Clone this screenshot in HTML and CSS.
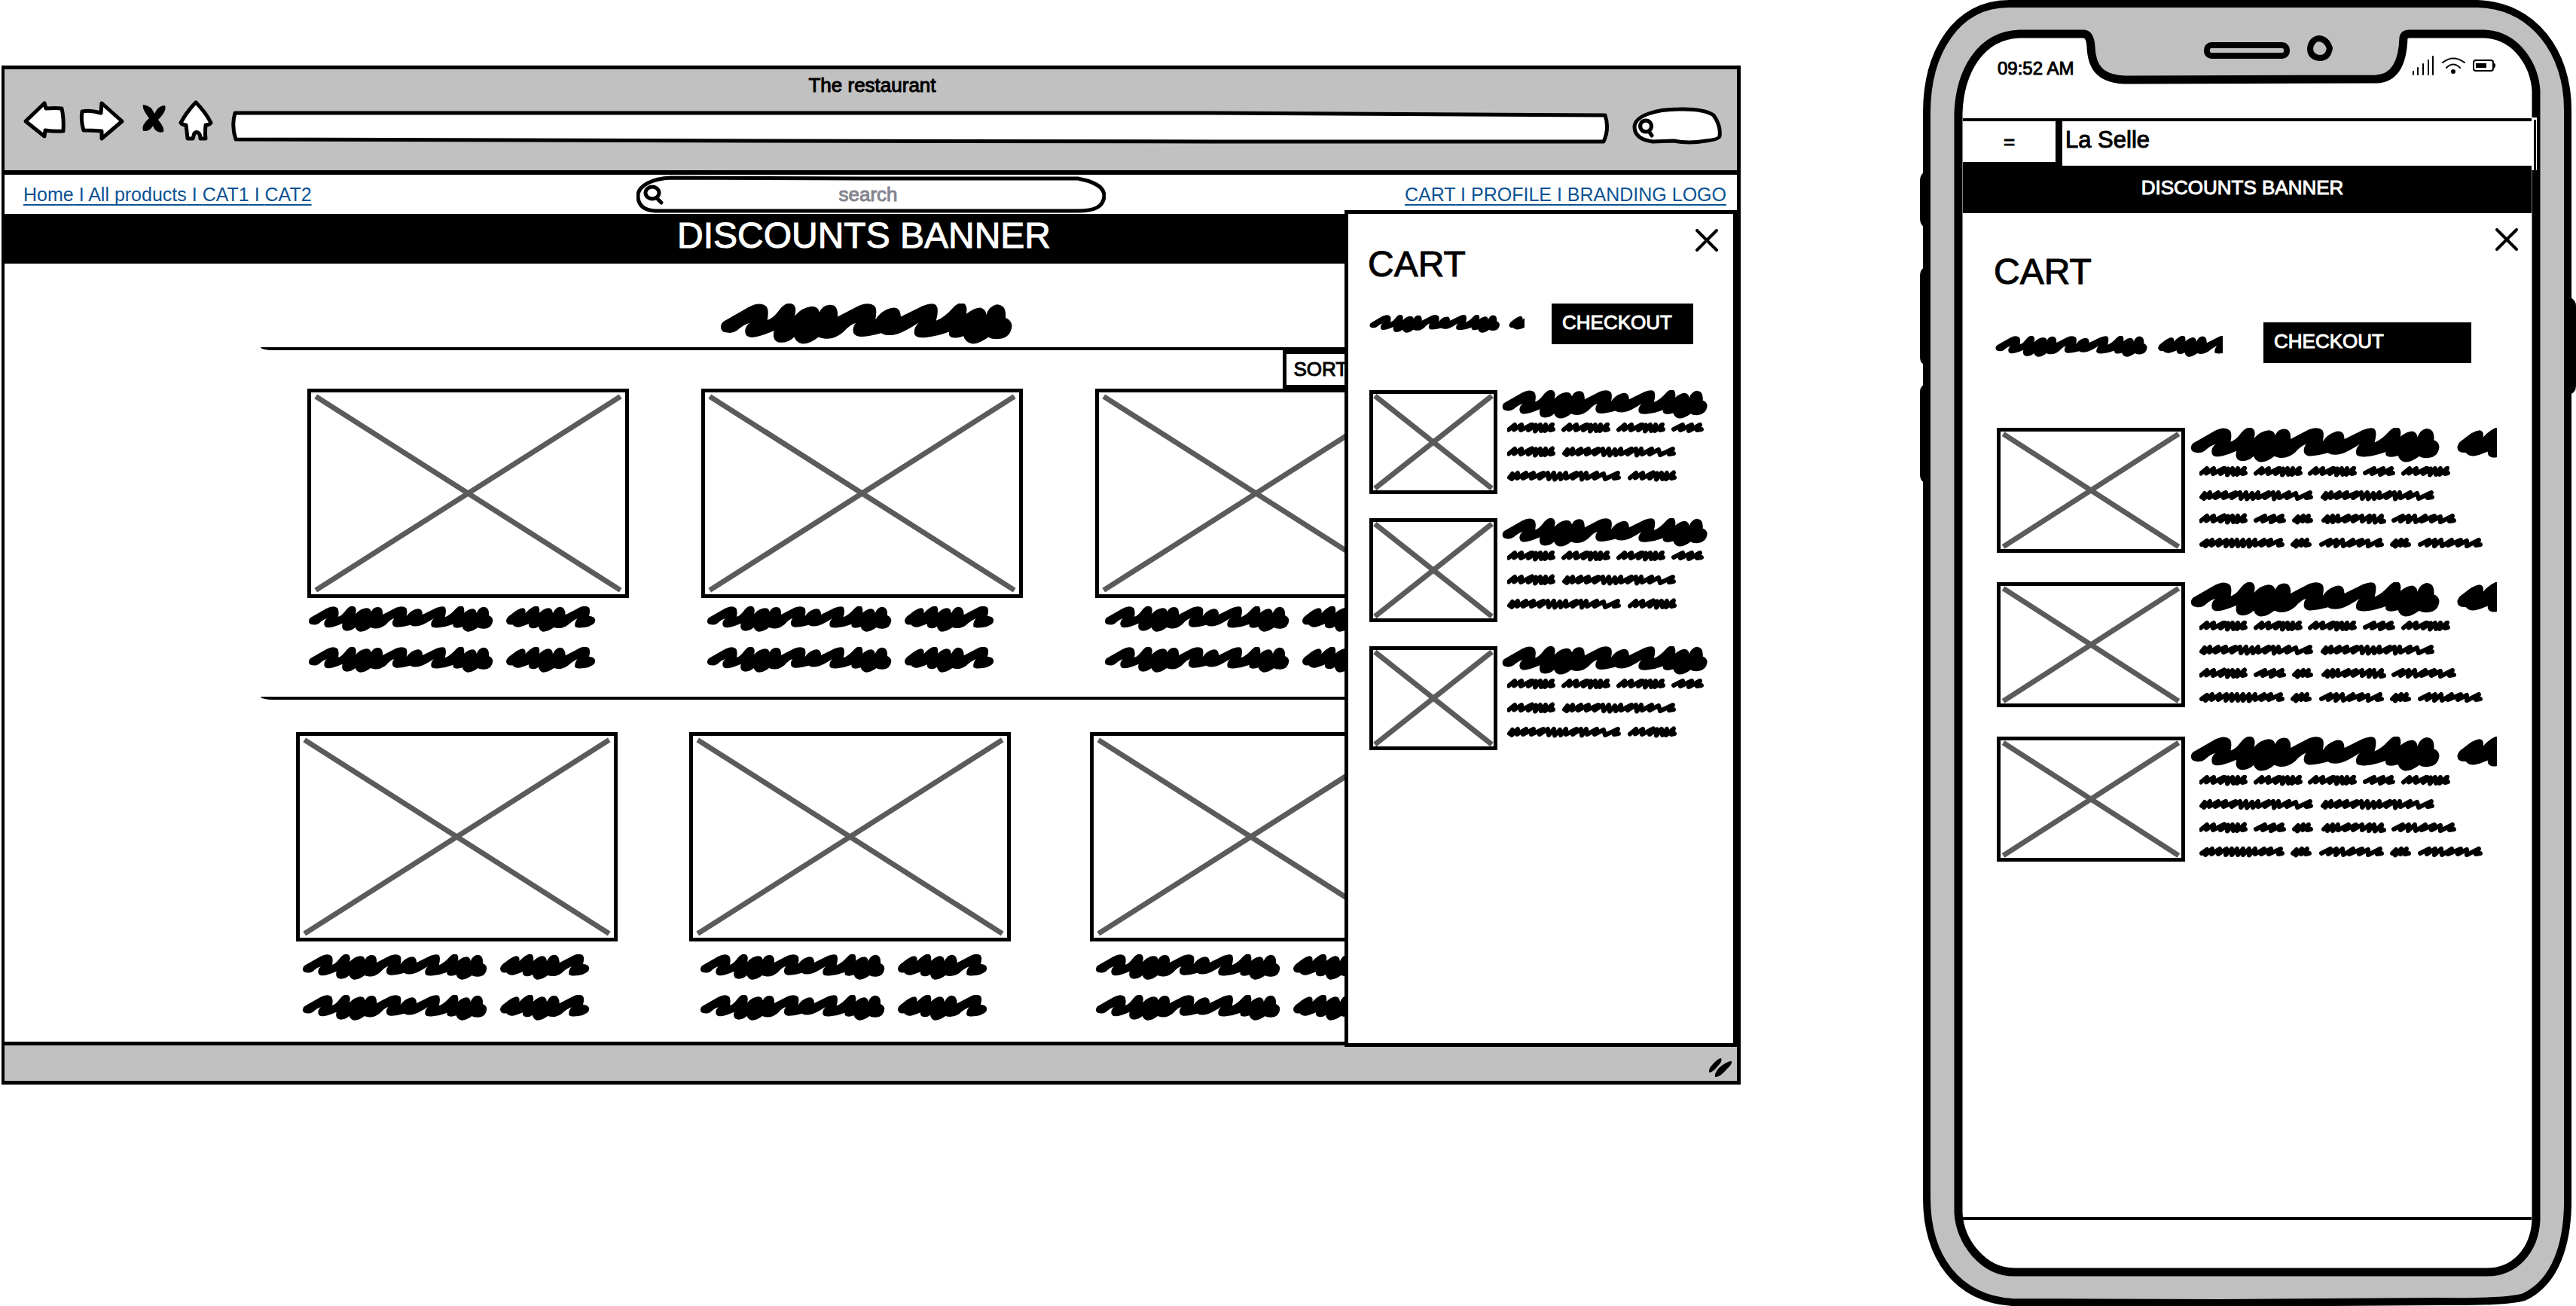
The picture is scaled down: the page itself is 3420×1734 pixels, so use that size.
FILE: index.html
```html
<!DOCTYPE html>
<html lang="en">
<head>
<meta charset="utf-8">
<title>The restaurant</title>
<link rel="stylesheet" href="styles.css">
</head>
<body>
<svg class="sprite" aria-hidden="true">
  <!-- two scribbled words, used for headings and labels -->
  <symbol id="phrase" overflow="visible">
    <path d="M2 56Q4 46 14 42L72 9Q100-6 116 7Q124 15 119 41Q132 38 146 20Q162-2 176-1Q196 2 188 31Q206 10 230 7Q248 7 250 22Q258 4 276 3Q298 2 296 33L350 5Q376-5 390 7Q396 15 391 40Q404 20 424 13Q454 2 455 33L510 6Q536-4 544 4Q552 14 544 43Q566 34 586 11Q602-6 614-1Q624 6 620 26Q640 10 656 10Q670 14 670 28Q678 6 696 2Q722 2 719 36Q734 42 735 56Q732 86 702 89Q682 90 676 84Q652 102 634 101Q618 98 613 82Q596 88 584 85Q574 82 577 71Q548 82 520 85Q490 88 489 74Q488 60 500 48Q466 70 448 76Q420 84 406 74Q372 84 350 83Q334 80 335 66Q336 54 342 49Q330 50 310 72Q286 92 262 88Q254 87 248 84Q226 102 206 101Q192 98 187 84Q172 98 154 98Q138 98 135 84Q134 76 136 68Q104 82 82 85Q62 86 63 68Q64 56 74 49Q60 52 42 68Q30 76 18 73Q0 72 2 56Z"/>
    <path d="M788 56Q792 42 806 34Q836 8 854 7Q868 10 864 28Q886 4 906-2Q924-2 920 26Q938 10 954 7Q972 6 974 28Q984 4 1002 2Q1024 2 1024 34L1076 7Q1098-6 1116 3Q1126 12 1118 38Q1142 40 1143 56Q1142 76 1100 84Q1068 88 1062 80Q1060 62 1072 49Q1056 54 1034 74Q1006 94 978 84Q954 102 934 101Q920 96 917 80Q904 90 890 87Q876 84 878 70Q850 82 838 83Q822 84 813 73Q788 76 788 56Z"/>
  </symbol>
  <symbol id="word-a" overflow="visible"><path d="M2 9.500L10 3L9 9.500L19 3L18 10L33 2.500L28 10L38 3.500L37 11.500L44 3L45 11L51 3L50 11L60 2.500L57 10L61 9"/></symbol>
  <symbol id="word-b" overflow="visible"><path d="M3 9L7 4L6 11L14 3L13 10L25 3L21 10L35 3L32 10L48 3L43 10L54 3L55 11L62 3L63 11.500L70 4L71 11L78 3L78 10L92 3L87 10L98 3L99 11.500L105 3L106 10L119 3L116 10L128 4L130 11L147 3L142 10L148 9"/></symbol>
  <symbol id="word-c" overflow="visible"><path d="M2 9L14 3L11 10L26 3L22 11L37 3L33 10L39 9"/></symbol>
  <symbol id="word-d" overflow="visible"><path d="M3 9L8 4L7 11.500L15 3L14 10L22 3L20 10L25 9"/></symbol>
  <symbol id="word-e" overflow="visible"><path d="M3 9L8 4L8 11L15 3L15 11L22 3L22 10L36 3L31 10L46 3L42 10L54 3L54 10L64 3L63 11L70 3L71 11.500L80 3L79 11L83 10"/></symbol>
  <symbol id="word-f" overflow="visible"><path d="M2 9L14 3L11 10L22 3L21 11L30 3L31 11L44 3L39 10L56 3L52 10L64 4L64 11L80 3L76 10L82 9"/></symbol>
  <symbol id="word-g" overflow="visible"><path d="M3 9L10 4L8 11L17 3L16 10L27 3L25 10L36 3L35 11L43 3L43 11L50 3L51 11L58 3L58 11L66 3L66 11.500L74 3L74 10L86 3L82 10L95 3L92 10L108 3L105 10L110 9"/></symbol>
  <symbol id="blurb-short" viewBox="0 0 262 79">
    <use href="#word-a"/><use href="#word-a" x="73"/><use href="#word-a" x="146"/><use href="#word-c" x="219"/>
    <use href="#word-a" y="32"/><use href="#word-b" x="73" y="32"/>
    <use href="#word-b" y="64"/><use href="#word-a" x="161" y="64"/>
  </symbol>
  <symbol id="blurb-long" viewBox="0 0 378 111">
    <use href="#word-a"/><use href="#word-a" x="73"/><use href="#word-a" x="145"/><use href="#word-c" x="218"/><use href="#word-a" x="269"/>
    <use href="#word-b" y="32"/><use href="#word-b" x="161" y="32"/>
    <use href="#word-a" y="63"/><use href="#word-c" x="73" y="63"/><use href="#word-d" x="123" y="63"/><use href="#word-e" x="162" y="63"/><use href="#word-f" x="256" y="63"/>
    <use href="#word-g" y="95"/><use href="#word-d" x="121" y="95"/><use href="#word-f" x="160" y="95"/><use href="#word-d" x="253" y="95"/><use href="#word-f" x="291" y="95"/>
  </symbol>
  <symbol id="cross" viewBox="0 0 100 100" preserveAspectRatio="none">
    <path d="M1.500 2L98.500 98M98.500 2L1.500 98" vector-effect="non-scaling-stroke"/>
  </symbol>
  <symbol id="close" viewBox="0 0 30 30"><path d="M2 2L28 28M28 2L2 28"/></symbol>
</svg>

<main class="board">
  <section class="window">
    <header class="chrome">
      <div class="window-title">The restaurant</div>
      <div class="toolbar">
        <button class="tool" aria-label="Back"><svg width="60" height="60" viewBox="0 0 60 60"><path class="shape" d="M4 29L29 5L31 12Q44 11 52 12Q55 25 54 42Q42 43 30 41L29 49Z"/></svg></button>
        <button class="tool" aria-label="Forward"><svg width="62" height="60" viewBox="0 0 62 60"><path class="shape" d="M5 16Q16 14 30 18L31 5L58 29L31 52L31 42Q18 41 7 41Q3 28 5 16Z"/></svg></button>
        <button class="tool" aria-label="Stop"><svg width="42" height="60" viewBox="-6 0 42 60"><path d="M4 7Q15 8 19 19Q24 8 33 8Q36 15 24 27Q33 38 31 43Q21 46 17 35Q13 43 4 42Q1 34 12 25Q2 12 4 7Z"/></svg></button>
        <button class="tool" aria-label="Home"><svg width="50" height="60" viewBox="0 0 50 60"><path class="shape" d="M24 4Q37 17 44 31Q42 34 37 34Q36 44 37 52L30 52Q30 47 28 45Q25 42 22 45L20 52L13 52Q12 42 11 34Q6 34 4 31Q12 16 24 4Z"/></svg></button>
        <div class="sketch-field address">
          <svg viewBox="0 0 1830 44" preserveAspectRatio="none" aria-hidden="true"><path class="shape" d="M5 3L1300 3L1824 6Q1830 24 1822 41L1300 41L700 40L6 38Q0 20 5 3Z"/></svg>
          <input type="text" aria-label="Address">
        </div>
        <div class="sketch-field quick">
          <svg viewBox="0 0 119 50" preserveAspectRatio="none" aria-hidden="true"><path class="shape" d="M3 26C4 12 30 3 62 3Q95 2 108 11Q118 25 116 39Q115 43 98 45Q75 49 55 45L27 46C12 44 3 38 3 26Z"/><path class="line" d="M18 18a7.500 7.500 0 1 0 .1 0ZM22 32L26 38"/></svg>
          <input type="search" aria-label="Quick search">
        </div>
      </div>
    </header>

    <nav class="nav">
      <div class="links"><a href="#">Home</a> I <a href="#">All products</a> I <a href="#">CAT1</a> I <a href="#">CAT2</a></div>
      <div class="sketch-field search">
        <svg viewBox="0 0 623 50" preserveAspectRatio="none" aria-hidden="true"><path class="shape" d="M46 3L300 4L586 4C608 8 621 16 621 27C620 42 608 47 586 47L25 47C8 46 2 38 2 27C2 14 20 4 46 3Z"/></svg>
        <svg class="lens" width="40" height="50" viewBox="0 0 40 50" aria-hidden="true"><ellipse class="line" cx="21" cy="23" rx="9" ry="8"/><path class="line" d="M27 30L33 36"/></svg>
        <input type="search" placeholder="search" aria-label="Search">
      </div>
      <div class="links account"><a href="#">CART</a> I <a href="#">PROFILE</a> I <a href="#">BRANDING LOGO</a></div>
    </nav>

    <div class="banner">DISCOUNTS BANNER</div>

    <div class="catalogue">
      <div class="page-title"><svg viewBox="0 0 736 102"><use href="#phrase"/></svg></div>
      <hr>
      <div class="sort-row"><button class="sort">SORT</button></div>
      <div class="shelf">
        <div class="photos">
          <svg class="photo"><use href="#cross"/></svg><svg class="photo"><use href="#cross"/></svg><svg class="photo"><use href="#cross"/></svg>
        </div>
        <div class="labels">
          <svg viewBox="0 0 1144 102"><use href="#phrase"/></svg><svg viewBox="0 0 1144 102"><use href="#phrase"/></svg><svg viewBox="0 0 1144 102"><use href="#phrase"/></svg>
          <svg viewBox="0 0 1144 102"><use href="#phrase"/></svg><svg viewBox="0 0 1144 102"><use href="#phrase"/></svg><svg viewBox="0 0 1144 102"><use href="#phrase"/></svg>
        </div>
      </div>
      <hr>
      <div class="shelf second">
        <div class="photos">
          <svg class="photo"><use href="#cross"/></svg><svg class="photo"><use href="#cross"/></svg><svg class="photo"><use href="#cross"/></svg>
        </div>
        <div class="labels">
          <svg viewBox="0 0 1144 102"><use href="#phrase"/></svg><svg viewBox="0 0 1144 102"><use href="#phrase"/></svg><svg viewBox="0 0 1144 102"><use href="#phrase"/></svg>
          <svg viewBox="0 0 1144 102"><use href="#phrase"/></svg><svg viewBox="0 0 1144 102"><use href="#phrase"/></svg><svg viewBox="0 0 1144 102"><use href="#phrase"/></svg>
        </div>
      </div>
    </div>

    <footer class="status">
      <svg width="34" height="28" viewBox="0 0 34 28" aria-hidden="true"><path d="M2 20Q1 15 7 9Q14 1 18 1Q20 5 14 11Q7 20 2 20ZM10 26Q9 21 15 14Q25 5 32 5Q33 9 26 15Q17 26 10 26Z"/></svg>
    </footer>

    <aside class="cart drawer">
      <button class="close" aria-label="Close cart"><svg width="30" height="30"><use href="#close"/></svg></button>
      <h2>CART</h2>
      <div class="summary">
        <svg class="total" viewBox="0 0 875 102"><use href="#phrase"/></svg>
        <button class="checkout">CHECKOUT</button>
      </div>
      <ul class="items">
        <li><svg class="photo"><use href="#cross"/></svg><div class="copy"><svg class="name" viewBox="0 0 736 102"><use href="#phrase"/></svg><svg class="blurb" width="262" height="79"><use href="#blurb-short"/></svg></div></li>
        <li><svg class="photo"><use href="#cross"/></svg><div class="copy"><svg class="name" viewBox="0 0 736 102"><use href="#phrase"/></svg><svg class="blurb" width="262" height="79"><use href="#blurb-short"/></svg></div></li>
        <li><svg class="photo"><use href="#cross"/></svg><div class="copy"><svg class="name" viewBox="0 0 736 102"><use href="#phrase"/></svg><svg class="blurb" width="262" height="79"><use href="#blurb-short"/></svg></div></li>
      </ul>
    </aside>
  </section>

  <section class="phone">
    <svg class="shell" viewBox="0 0 871 1734" preserveAspectRatio="none" aria-hidden="true">
      <path d="M6 228Q0 232 0 240V290Q0 298 6 302ZM6 355Q0 358 0 366V474Q0 482 6 484ZM6 510Q0 514 0 520V630Q0 638 6 641ZM864 395Q871 399 871 406V512Q871 521 864 523Z"/>
      <path class="metal" d="M9 150C9 70 48 5 118 5L740 5C815 7 860 70 860 145L860 1600C859 1650 845 1702 802 1722Q780 1729 690 1728L400 1730L122 1729C50 1724 9 1670 9 1590Z"/>
      <path class="glass" d="M51 150C53 95 80 47 132 45L218 45Q226 46 227 62C228 90 240 105 272 106L606 105C630 104 641 84 642 50Q643 45 650 45L749 45C795 47 816 90 818 120L818 1620C816 1660 790 1689 753 1689L125 1689C85 1689 53 1650 51 1610Z"/>
      <rect class="hole" x="381" y="60" width="106" height="14" rx="6"/>
      <path class="hole" d="M530 51Q540 52 544 64Q542 77 531 77Q518 76 518 64Q520 52 530 51Z"/>
      <path class="gloss" d="M812 156H819V226H812Z"/>
      <path d="M815 159H818V226H815Z"/>
    </svg>
    <div class="screen">
      <div class="statusbar">
        <span>09:52 AM</span>
        <svg width="114" height="30" viewBox="0 0 114 30" aria-hidden="true">
          <path class="fine" d="M4 23V27M10 18V27M17 13V27M24 8V27M30 3V27"/>
          <path class="fine" d="M43 11Q57 0 72 11M48 18Q57 9 66 18"/>
          <circle cx="57" cy="23" r="3"/>
          <rect class="fine" x="84" y="8" width="26" height="14" rx="3"/>
          <path d="M87 12H101V18H87ZM110 11L113 13V17L110 19Z"/>
        </svg>
      </div>
      <header class="app-bar">
        <button class="menu" aria-label="Menu">=</button>
        <div class="brand">La Selle</div>
      </header>
      <div class="banner small">DISCOUNTS BANNER</div>
      <div class="cart">
        <button class="close" aria-label="Close cart"><svg width="30" height="30"><use href="#close"/></svg></button>
        <h2>CART</h2>
        <div class="summary">
          <svg class="total" viewBox="0 0 1101 102"><use href="#phrase"/></svg>
          <button class="checkout">CHECKOUT</button>
        </div>
        <ul class="items">
          <li><svg class="photo"><use href="#cross"/></svg><div class="copy"><svg class="name" viewBox="0 0 905 102"><use href="#phrase"/></svg><svg class="blurb" width="378" height="111"><use href="#blurb-long"/></svg></div></li>
          <li><svg class="photo"><use href="#cross"/></svg><div class="copy"><svg class="name" viewBox="0 0 905 102"><use href="#phrase"/></svg><svg class="blurb" width="378" height="111"><use href="#blurb-long"/></svg></div></li>
          <li><svg class="photo"><use href="#cross"/></svg><div class="copy"><svg class="name" viewBox="0 0 905 102"><use href="#phrase"/></svg><svg class="blurb" width="378" height="111"><use href="#blurb-long"/></svg></div></li>
        </ul>
      </div>
      <div class="home-area"></div>
    </div>
  </section>
</main>
</body>
</html>
```
FILE: styles.css
```css
* { box-sizing: border-box; }

body {
  margin: 0;
  background: #fff;
  color: #000;
  font-family: "Liberation Sans", Arial, sans-serif;
  font-size: 26px;
  line-height: 30px;
  -webkit-text-stroke: 1px currentColor;
}

svg { display: block; }

button, input {
  font: inherit;
  color: inherit;
  background: none;
  border: 0;
  border-radius: 0;
  padding: 0;
  margin: 0;
  outline: 0;
  appearance: none;
}

.sprite {
  position: absolute;
  width: 0;
  height: 0;
}

.board {
  display: grid;
  grid-template-columns: 2311fr 238fr 871fr;
  align-items: start;
}

/* shared sketch strokes */
.shape { fill: #fff; stroke: #000; stroke-width: 5; stroke-linejoin: round; }
.line { fill: none; stroke: #000; stroke-width: 5; stroke-linecap: round; }
.fine { fill: none; stroke: #000; stroke-width: 2; stroke-linecap: round; }
.blurb { fill: none; stroke: #000; stroke-width: 6; stroke-linecap: round; stroke-linejoin: round; overflow: visible; }

.photo {
  width: 100%;
  border: 5px solid #000;
  background: #fff;
  fill: none;
  stroke: #5b5b5b;
  stroke-width: 7;
}

/* browser window */
.window {
  position: relative;
  margin: 87px 0 0 2px;
  border: 5px solid #000;
  border-left-width: 4px;
}

.chrome {
  background: #c1c1c1;
  border-bottom: 6px solid #000;
  padding: 6px 20px 34px 24px;
}

.window-title { text-align: center; }

.toolbar {
  display: flex;
  align-items: flex-end;
  gap: 14px;
  padding-top: 4px;
}

.tool { flex: none; }

.sketch-field { display: grid; }
.sketch-field > * { grid-area: 1 / 1; }
.sketch-field > svg { width: 100%; height: 100%; }
.sketch-field > input { width: 100%; padding: 0 50px; min-width: 0; }

.address { flex: 1; height: 44px; margin: 0 16px 1px 7px; }
.quick { flex: none; width: 119px; height: 50px; }

.nav {
  display: grid;
  grid-template-columns: 839fr 623fr 838fr;
  align-items: center;
  height: 52px;
}

.links {
  padding-left: 25px;
  font-size: 25px;
  color: #0b5394;
  text-decoration: underline;
  text-decoration-thickness: 2px;
  text-underline-offset: 4px;
  text-decoration-skip-ink: none;
  -webkit-text-stroke-width: 0;
}
.links a { color: inherit; text-decoration: none; }
.account { text-align: right; padding: 0 14px 0 0; }

.search { height: 50px; }
.sketch-field > .lens { width: 40px; }
.search input { text-align: center; padding: 0 40px 0 54px; }
.search input::placeholder { color: #85858f; opacity: 1; }

.banner {
  background: #000;
  color: #fff;
  text-align: center;
  font-size: 48px;
  line-height: 58px;
  padding: 0 18px 8px 0;
}

.catalogue { padding: 53px 0 28px; }

.page-title { padding-right: 12px; }
.page-title svg { width: 388px; height: 54px; margin: 0 auto; }

hr {
  height: 4px;
  margin: 4px 0 0 340px;
  border: 0;
  background: #000;
  border-bottom-left-radius: 16px 4px;
}

.sort-row { padding-left: 73.8%; }
.sort {
  width: 160px;
  height: 51px;
  border: 5px solid #000;
  padding: 0 0 2px 9px;
  text-align: left;
}

.photos, .labels { display: grid; }
.photos { grid-template-columns: 402fr 427fr 96fr 427fr 96fr 427fr 425fr; }
.photos .photo { aspect-ratio: 427 / 278; }
.photos > :nth-child(1) { grid-column: 2; }
.photos > :nth-child(2) { grid-column: 4; }
.photos > :nth-child(3) { grid-column: 6; }

.labels {
  grid-template-columns: 528fr 528fr 839fr;
  row-gap: 20px;
  padding: 11px 0 28px 403px;
}
.labels svg { width: 382px; height: 34px; }

.second { padding-top: 43px; }
.second .photos { grid-template-columns: 387fr 427fr 95fr 427fr 105fr 427fr 432fr; }
.second .labels { grid-template-columns: 528fr 525fr 852fr; padding: 17px 0 0 395px; }

.status {
  display: flex;
  justify-content: flex-end;
  height: 52px;
  padding: 16px 5px 0 0;
  border-top: 5px solid #000;
  background: #c1c1c1;
}

/* cart, shared by the drawer and the phone */
.cart { position: relative; }
.cart h2 {
  margin: 0;
  font-size: 48px;
  line-height: 56px;
  font-weight: normal;
}
.close {
  position: absolute;
  top: 20px;
  right: 18px;
  fill: none;
  stroke: #000;
  stroke-width: 4;
  stroke-linecap: round;
}
.summary { display: flex; align-items: center; }
.checkout {
  height: 54px;
  padding: 0 0 4px 14px;
  background: #000;
  color: #fff;
  text-align: left;
}
.items {
  display: grid;
  margin: 0;
  padding: 0;
  list-style: none;
}
.items li { display: flex; }
.items .photo, .items .name { flex: none; }

.drawer {
  position: absolute;
  top: 187px;
  right: 0;
  bottom: 45px;
  width: 521px;
  padding: 39px 0 0 28px;
  background: #fff;
  border: 5px solid #000;
}
.drawer .close { right: 20px; }
.drawer h2, .screen h2 { text-indent: -2px; }
.drawer .summary { gap: 36px; margin-top: 24px; }
.drawer .total { width: 206px; height: 24px; }
.drawer .checkout { width: 188px; }
.drawer .items { row-gap: 32px; margin-top: 61px; }
.drawer .photo { width: 170px; height: 138px; }
.drawer .copy { padding-left: 6px; }
.drawer .name { width: 273px; height: 38px; }
.drawer .blurb { margin: 5px 0 0 7px; }

/* phone */
.phone {
  position: relative;
  grid-column: 3;
  display: flex;
  padding: 50px 59px 50px 57px;
  aspect-ratio: 871 / 1734;
}
.shell { position: absolute; inset: 0; width: 100%; height: 100%; }
.metal { fill: #c0c0c0; stroke: #000; stroke-width: 10; }
.glass { fill: #fff; stroke: #000; stroke-width: 11; }
.hole { fill: #c0c0c0; stroke: #000; stroke-width: 8; }
.gloss { fill: #fff; }

.screen {
  position: relative;
  display: flex;
  flex: 1;
  flex-direction: column;
}

.statusbar {
  display: flex;
  justify-content: space-between;
  height: 107px;
  padding: 22px 47px 0 46px;
  font-size: 24px;
  line-height: 38px;
}

.app-bar {
  display: flex;
  height: 63px;
  border-top: 4px solid #000;
}
.menu {
  width: 132px;
  border: solid #000;
  border-width: 0 9px 5px 0;
}
.brand { padding: 7px 4px; font-size: 31px; line-height: 36px; }

.banner.small { font-size: 26px; padding: 0 13px 5px 0; }

.screen .cart { flex: 1; padding: 50px 0 0 43px; }
.screen .summary { gap: 54px; margin-top: 39px; }
.screen .total { width: 302px; height: 28px; margin-top: 10px; }
.screen .checkout { width: 276px; }
.screen .items { row-gap: 39px; margin: 86px 0 0 2px; }
.screen .items .photo { width: 250px; height: 166px; }
.screen .copy { padding-left: 7px; }
.screen .name { width: 407px; height: 46px; }
.screen .blurb { margin: 5px 0 0 12px; }

.home-area { height: 68px; border-top: 4px solid #000; }
```
